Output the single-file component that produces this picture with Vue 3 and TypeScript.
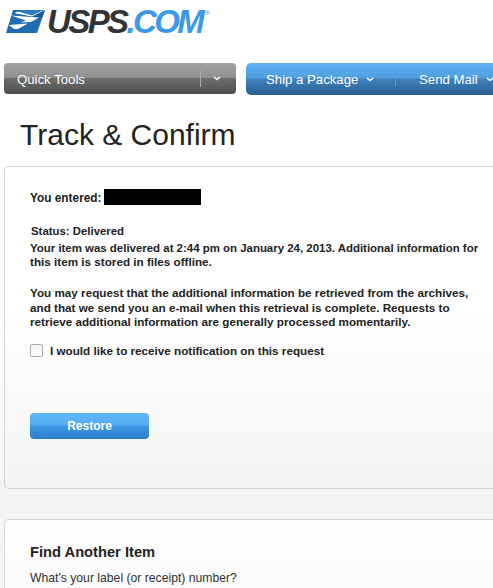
<script setup lang="ts">
const navItems = ["Ship a Package", "Send Mail"];
</script>

<template>
  <div class="page">
    <header class="logo">
      <svg class="eagle" width="40" height="24" viewBox="0 0 40 24">
        <path d="M7 0H39L31 23H0Z" fill="#1d6bb0" />
        <path d="M7 0H39L36 8L15 5Z" fill="#1a5a9a" />
        <path d="M5 5.5L33 7.5L25 12L14 12.5L20 10.5Z" fill="#fff" />
        <path d="M39 0L26 6.5L10 3.5L9 2Z" fill="#fff" />
        <path d="M3 15L22 13.5L12 19L8 19Z" fill="#fff" />
        <path d="M7 0H38L26 5.5Z" fill="#2a7cc4" />
      </svg>
      <span class="wordmark">USPS<em>.COM</em></span><sup class="reg">®</sup>
    </header>

    <nav class="nav">
      <div class="quick">
        <span class="quick-label">Quick Tools</span>
        <span class="quick-sep"></span>
        <svg class="chev quick-chev" width="8" height="5" viewBox="0 0 8 5">
          <path d="M1 1L4 3.5L7 1" fill="none" stroke="#fff" stroke-width="1.5" />
        </svg>
      </div>
      <div class="main-nav">
        <div v-for="item in navItems" :key="item" class="nav-item">
          <span>{{ item }}</span>
          <svg class="chev" width="8" height="5" viewBox="0 0 8 5">
            <path d="M1 1L4 3.5L7 1" fill="none" stroke="#fff" stroke-width="1.5" />
          </svg>
        </div>
      </div>
    </nav>

    <h1 class="title">Track &amp; Confirm</h1>

    <section class="card result">
      <div class="entered">
        <strong>You entered:</strong>
        <span class="redacted"></span>
      </div>
      <p class="status">Status: Delivered</p>
      <p class="copy">
        <span class="tight">Your item was delivered at 2:44 pm on January 24, 2013. Additional information for</span>
        this item is stored in files offline.
      </p>
      <p class="copy second">
        You may request that the additional information be retrieved from the archives,
        and that we send you an e-mail when this retrieval is complete. Requests to
        retrieve additional information are generally processed momentarily.
      </p>
      <label class="check">
        <span class="box"></span>
        I would like to receive notification on this request
      </label>
      <button class="restore" type="button">Restore</button>
    </section>

    <section class="card find">
      <h2>Find Another Item</h2>
      <p>What's your label (or receipt) number?</p>
    </section>
  </div>
</template>

<style>
html,
body {
  margin: 0;
  overflow: hidden;
}
</style>

<style scoped>
.page {
  width: 493px;
  height: 588px;
  overflow: hidden;
  box-sizing: border-box;
  padding-top: 9px;
  font-family: "Liberation Sans", Arial, sans-serif;
  color: #222;
  background: linear-gradient(#fff 0, #fff 300px, #f4f4f5 490px, #f5f5f6 588px);
}
.logo {
  display: flex;
  align-items: flex-start;
  height: 54px;
  padding-left: 6px;
}
.eagle {
  flex: none;
  margin-top: 1px;
}
.wordmark {
  margin: -1px 0 0 1px;
  font-size: 33px;
  line-height: 28px;
  font-weight: bold;
  font-style: italic;
  letter-spacing: -2.6px;
  color: #333437;
}
.wordmark em {
  color: #3c98e8;
  letter-spacing: -2.6px;
}
.reg {
  font-size: 6px;
  line-height: 6px;
  color: #3c6f9f;
  margin: 1px 0 0 3px;
}
.nav {
  display: flex;
  gap: 10px;
  padding-left: 4px;
  height: 32px;
  font-size: 13.2px;
  color: #fff;
}
.quick {
  flex: none;
  width: 232px;
  height: 31px;
  display: flex;
  align-items: center;
  box-sizing: border-box;
  border-radius: 4px;
  background: linear-gradient(#a3a3a3 0, #8f8f8f 48%, #6d6d6d 50%, #4e4e4e 100%);
}
.quick-label {
  margin: 1px 0 0 13px;
  flex: 1;
}
.quick-sep {
  width: 1px;
  height: 17px;
  background: #aaa;
}
.quick-chev {
  margin: 0 15px 0 12px;
}
.main-nav {
  flex: 1;
  display: flex;
  align-items: center;
  height: 32px;
  border-radius: 5px 0 0 5px;
  background: linear-gradient(#5fb2f6 0, #509fe0 46%, #3f82bd 50%, #2a5f8f 100%);
  overflow: hidden;
}
.nav-item {
  flex: none;
  display: flex;
  align-items: center;
  gap: 8px;
  height: 14px;
  white-space: nowrap;
}
.nav-item:first-child {
  width: 129px;
  padding-left: 20px;
  border-right: 1px solid #5f9bcf;
}
.nav-item:last-child {
  padding-left: 23px;
}
.title {
  margin: 24px 0 0 20px;
  font-size: 30px;
  line-height: 32px;
  font-weight: normal;
  color: #222;
}
.card {
  margin-left: 4px;
  box-sizing: border-box;
  width: 520px;
  border: 1px solid #d4d4d4;
  border-right: 0;
  border-radius: 5px 0 0 5px;
  background: linear-gradient(#fff 0, #fff 45%, #f4f4f5 100%);
}
.result {
  height: 323px;
  margin-top: 15px;
  padding: 23px 0 0 25px;
}
.entered {
  display: flex;
  align-items: center;
  gap: 2px;
  height: 16px;
  font-size: 11.85px;
}
.redacted {
  align-self: flex-start;
  margin-top: -1px;
  width: 97px;
  height: 16px;
  background: #000;
}
.status,
.copy,
.check {
  font-size: 11.7px;
  font-weight: bold;
  line-height: 14px;
}
.status {
  margin: 18px 0 0 1px;
  font-size: 11.4px;
}
.copy {
  margin: 3px 0 0;
  width: 460px;
}
.tight {
  display: block;
  font-size: 11.45px;
}
.copy.second {
  margin-top: 17px;
  line-height: 14.5px;
}
.check {
  display: flex;
  align-items: center;
  gap: 7px;
  margin-top: 14px;
}
.box {
  width: 11px;
  height: 11px;
  border: 1px solid #aaa;
  border-radius: 2px;
  background: linear-gradient(#f4f4f4, #fff);
}
.restore {
  display: block;
  margin-top: 55px;
  width: 119px;
  height: 26px;
  padding: 0;
  border: 0;
  border-radius: 4px;
  font-family: inherit;
  font-size: 12px;
  font-weight: bold;
  color: #fff;
  background: linear-gradient(#5fb6f8 0, #55aef3 46%, #3f97e2 50%, #2a7fcd 100%);
}
.find {
  margin-top: 30px;
  height: 120px;
  padding: 24px 0 0 25px;
  background: linear-gradient(#fff 0, #f8f8f8 100%);
}
.find h2 {
  margin: 0;
  font-size: 14.7px;
  line-height: 16px;
}
.find p {
  margin: 10px 0 0;
  font-size: 12.2px;
  line-height: 16px;
  color: #333;
}
</style>
